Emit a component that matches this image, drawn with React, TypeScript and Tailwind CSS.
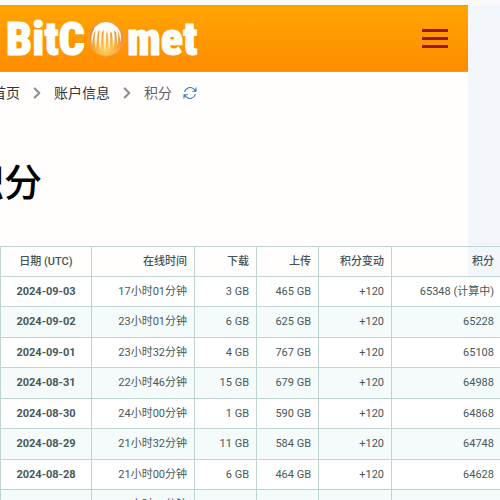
import { ChevronRight } from "lucide-react";

type CreditRow = {
  date: string;
  online: string;
  download: string;
  upload: string;
  change: string;
  total: string;
};

const rows: CreditRow[] = [
  { date: "2024-09-03", online: "17小时01分钟", download: "3 GB", upload: "465 GB", change: "+120", total: "65348 (计算中)" },
  { date: "2024-09-02", online: "23小时01分钟", download: "6 GB", upload: "625 GB", change: "+120", total: "65228" },
  { date: "2024-09-01", online: "23小时32分钟", download: "4 GB", upload: "767 GB", change: "+120", total: "65108" },
  { date: "2024-08-31", online: "22小时46分钟", download: "15 GB", upload: "679 GB", change: "+120", total: "64988" },
  { date: "2024-08-30", online: "24小时00分钟", download: "1 GB", upload: "590 GB", change: "+120", total: "64868" },
  { date: "2024-08-29", online: "21小时32分钟", download: "11 GB", upload: "584 GB", change: "+120", total: "64748" },
  { date: "2024-08-28", online: "21小时00分钟", download: "6 GB", upload: "464 GB", change: "+120", total: "64628" },
  { date: "2024-08-27", online: "20小时17分钟", download: "4 GB", upload: "344 GB", change: "+120", total: "64508" },
];

function CometBall() {
  return (
    <svg aria-hidden="true" className="h-9 w-9 shrink-0" viewBox="0 0 36 36">
      <defs>
        <radialGradient id="ball" cx="50%" cy="80%" r="80%">
          <stop offset="0" stopColor="#ffd25c" />
          <stop offset="0.5" stopColor="#f7a233" />
          <stop offset="1" stopColor="#e87424" />
        </radialGradient>
        <linearGradient id="flame" gradientUnits="userSpaceOnUse" x1="0" x2="0" y1="2" y2="32">
          <stop offset="0" stopColor="#ffffff" />
          <stop offset="0.5" stopColor="#fff8ea" />
          <stop offset="1" stopColor="#ffdc88" />
        </linearGradient>
      </defs>
      <circle cx="18" cy="18" r="17.3" fill="url(#ball)" stroke="#ee9c58" strokeWidth="1" />
      <g fill="url(#flame)">
        <path d="M6 7Q11 1 18 1T30 7L28 11L25 9L23 12L20 9L18 13L16 9L13 12L11 9L8 11Z" />
        <path d="M16 7C15 15 15.500 24 16.800 31C18.300 24 18.500 15 17.800 7Z" />
        <path d="M19 7C19.800 15 20.200 22 21 30C22.700 23 22.800 14 21.300 7Z" />
        <path d="M12 7C10.200 15 10.600 23 12.400 30C13.500 22 13.300 15 14.500 7Z" />
        <path d="M8.500 7C6 14 6 22 8 28C8.800 20 9.200 14 11.200 7Z" />
        <path d="M23 7C24.500 15 24.800 22 25.200 28C27 22 27.300 14 25.500 7Z" />
        <path d="M27 7C28.800 13 29 19 29 25C31 19 30.800 12 28.500 6Z" />
        <path d="M7.500 6C3.500 11 2.500 18 4.200 24C4.800 17 5.500 12 8.500 8Z" />
        <path d="M29 6C33 10 34.200 16 32.500 21C32 16 31 12 28.500 8Z" />
      </g>
    </svg>
  );
}

function RefreshIcon() {
  return (
    <svg aria-hidden="true" className="h-4 w-4" fill="none" stroke="#3470b5" strokeLinecap="round" strokeLinejoin="round" strokeWidth="1.6" viewBox="0 0 24 24">
      <path d="M16.023 9.348h4.992v-.001M2.985 19.644v-4.992m0 0h4.992m-4.993 0 3.181 3.183a8.250 8.250 0 0 0 13.803-3.700M4.031 9.865a8.250 8.250 0 0 1 13.803-3.700l3.181 3.182m0-4.991v4.990" />
    </svg>
  );
}

const cell = "border border-[#c0d4d3] py-0 pr-[7px] pl-1 text-right whitespace-nowrap";

export default function App() {
  return (
    <div className="min-h-screen overflow-hidden bg-[#f3f7fb] font-['Roboto','Noto_Sans_CJK_SC',sans-serif]">
      <div className="h-[5px] bg-[#fafafc]" />
      <div className="mr-8 bg-[#fffefd]">
        <header className="flex h-[67px] items-center justify-between border-y border-[#e8a128] bg-linear-to-b from-[#ffa500] to-[#ff8c00] pr-5 pl-[6px]">
          <a
            aria-label="BitComet"
            className="flex items-center gap-[3px] font-['Roboto_Condensed','Roboto',sans-serif] text-[46px] leading-none font-black text-white [-webkit-text-stroke:1px_white]"
            href="#"
          >
            <span>BitC</span>
            <CometBall />
            <span>met</span>
          </a>
          <button aria-label="菜单" className="flex w-[26px] flex-col gap-[5px]" type="button">
            <span className="h-[3px] w-full bg-[#a01620]" />
            <span className="h-[3px] w-full bg-[#a01620]" />
            <span className="h-[3px] w-full bg-[#a01620]" />
          </button>
        </header>

        <nav aria-label="面包屑" className="-ml-2 flex h-[42px] items-center text-sm text-[#30343b]">
          <a href="#">首页</a>
          <ChevronRight aria-hidden="true" className="mx-2 h-[18px] w-[18px] text-[#8c929c]" strokeWidth={3} />
          <a href="#">账户信息</a>
          <ChevronRight aria-hidden="true" className="mx-2 h-[18px] w-[18px] text-[#8c929c]" strokeWidth={3} />
          <span className="text-[#5d626b]">积分</span>
          <button aria-label="刷新" className="ml-[10px]" type="button">
            <RefreshIcon />
          </button>
        </nav>

        <h1 className="-ml-[34px] pt-[46px] pb-10 text-[38px] leading-[46px] font-medium text-black">积分</h1>
      </div>

      <div className="bg-linear-to-r from-[#fffefc] from-[calc(100%-32px)] to-[#f3f7fb] to-[calc(100%-32px)]">
        <table className="w-[calc(100%+2px)] table-fixed border-collapse text-[11px] leading-4 text-[#48585a]">
          <colgroup>
            <col className="w-[91px]" />
            <col className="w-[103px]" />
            <col className="w-[62px]" />
            <col className="w-[62px]" />
            <col className="w-[73px]" />
            <col />
          </colgroup>
          <thead className="text-[#435357]">
            <tr className="h-[30px] *:font-medium">
              <th className="border border-[#c0d4d3] p-0 text-center">日期 (UTC)</th>
              <th className={cell}>在线时间</th>
              <th className={cell}>下载</th>
              <th className={cell}>上传</th>
              <th className={cell}>积分变动</th>
              <th className={cell}>积分</th>
            </tr>
          </thead>
          <tbody>
            {rows.map((row) => (
              <tr className="h-[30px] bg-white even:h-[31px] even:bg-[#f5fbfb]" key={row.date}>
                <th className="border border-[#c0d4d3] p-0 text-center font-bold" scope="row">{row.date}</th>
                <td className={cell}>{row.online}</td>
                <td className={cell}>{row.download}</td>
                <td className={cell}>{row.upload}</td>
                <td className={cell}>{row.change}</td>
                <td className={cell}>{row.total}</td>
              </tr>
            ))}
          </tbody>
        </table>
      </div>
    </div>
  );
}
